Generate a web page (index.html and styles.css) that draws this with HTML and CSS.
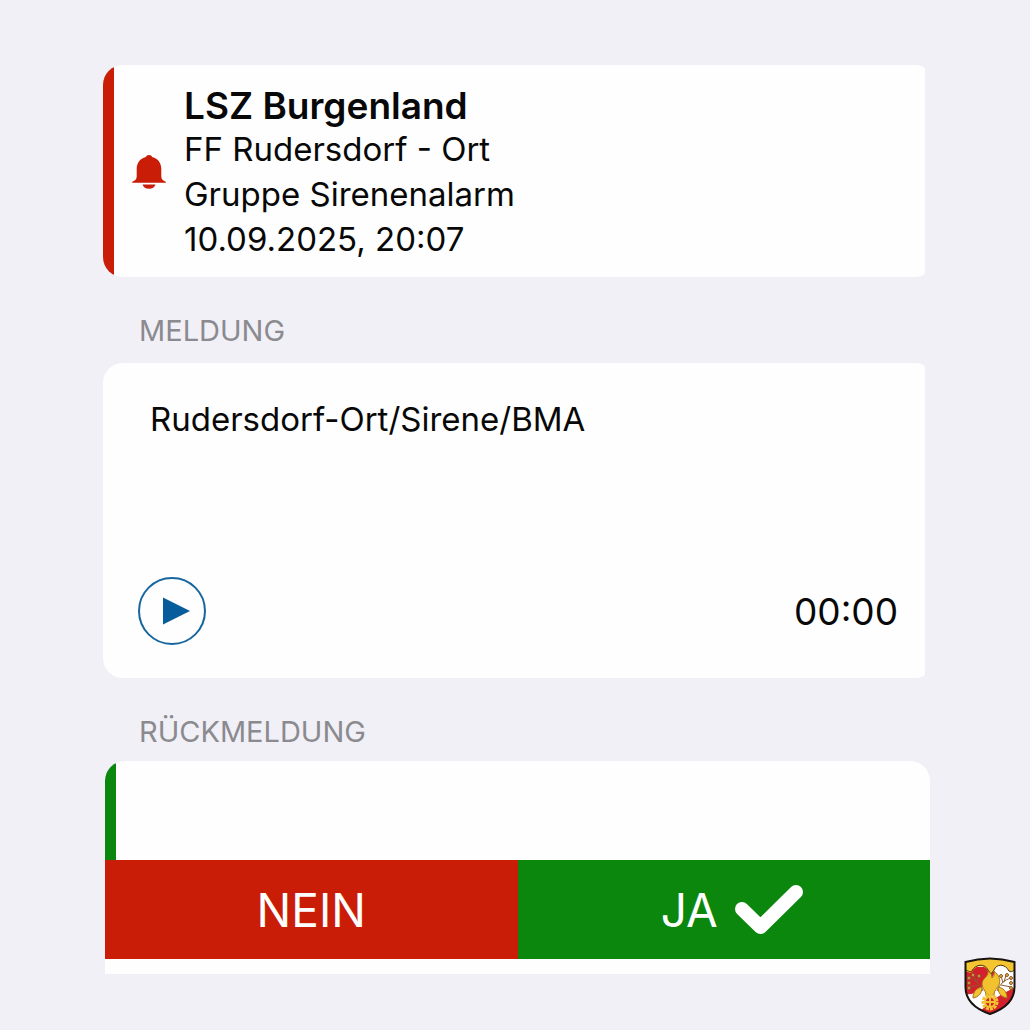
FILE: index.html
```html
<!DOCTYPE html>
<html lang="de">
  <head>
    <meta charset="UTF-8" />
    <meta name="viewport" content="width=device-width, initial-scale=1.0" />
    <title>Alarm</title>
    <link rel="stylesheet" href="styles.css">
  </head>
  <body>
    <main class="container">
      <section class="card alarm">
        <svg class="bell" viewBox="0 0 34 36" aria-hidden="true">
          <path d="M17 0c1.700 0 2.700.8 3.200 2C26 3.500 29.300 8 29.300 14v7.500c0 2.500 1.500 4.200 4.500 5.300v1H.2v-1c3-1.100 4.500-2.800 4.500-5.300V14C4.700 8 8 3.500 13.800 2 14.300.8 15.300 0 17 0z" />
          <path d="M10.500 29.500h13c-.8 2.700-3.200 4.300-6.500 4.300s-5.700-1.600-6.500-4.300z" />
        </svg>
        <div>
          <h1 class="alarm-title">LSZ Burgenland</h1>
          <p>FF Rudersdorf - Ort</p>
          <p>Gruppe Sirenenalarm</p>
          <p>10.09.2025, 20:07</p>
        </div>
      </section>

      <h2 class="label">MELDUNG</h2>
      <section class="card message">
        <p>Rudersdorf-Ort/Sirene/BMA</p>
        <div class="player">
          <button class="play" type="button" aria-label="Abspielen">
            <svg viewBox="0 0 68 68" aria-hidden="true">
              <circle cx="34" cy="34" r="33" />
              <path d="M25 20.500l27 13.500-27 13.500z" />
            </svg>
          </button>
          <span class="time">00:00</span>
        </div>
      </section>

      <h2 class="label">RÜCKMELDUNG</h2>
      <section class="card response">
        <div class="status"></div>
        <div class="buttons">
          <button class="btn no" type="button">NEIN</button>
          <button class="btn yes" type="button">
            JA
            <svg class="check" viewBox="0 0 68 50" aria-hidden="true">
              <path d="M7 24l18.500 18L61 7" />
            </svg>
          </button>
        </div>
      </section>
    </main>

    <svg class="crest" viewBox="0 0 52 58" role="img" aria-label="Wappen">
      <defs>
        <clipPath id="shield">
          <path d="M1.500 5C17 .5 35 .5 50.500 5v25c0 13-10 22-24.500 27C11.500 52 1.500 43 1.500 30z" />
        </clipPath>
      </defs>
      <g clip-path="url(#shield)">
        <path fill="#fff" d="M0 0h52v58H0z" />
        <path fill="#d4202c" d="M0 10h28c2 4 3 6 1 9-3 4-9 8-13 13C11 37 6 38 0 37z" />
        <path fill="#d4202c" d="M52 30C41 35 23 44 14 58h38z" />
        <path fill="#f5c431" d="M0 0h52v13c-3 0-4 3-7 1-4-8-13-7-15 0l-3 3-3-3c-3-7-13-6-16 1-3 2-4-1-8-1z" />
        <path class="crest-line" d="M1 13c3 0 4 3 7 1 3-7 13-8 16-1l3 4 3-4c2-6 11-7 15 1 3 2 4-1 7-1" />
        <path class="stem" d="M19 34c-3-7-7-11-14-13m7 4l-2-7m5 10l-10 2m8-4l2-7M33 34c3-7 7-11 14-13m-7 4l2-7m-5 10l10 2m-8-4l-2-7" />
        <g class="berries">
          <circle cx="5" cy="21" r="1.500" /><circle cx="9" cy="18" r="1.500" /><circle cx="5" cy="26" r="1.500" />
          <circle cx="5" cy="31" r="1.500" /><circle cx="15" cy="19" r="1.500" />
          <circle cx="47" cy="21" r="1.500" /><circle cx="43" cy="18" r="1.500" /><circle cx="47" cy="26" r="1.500" />
          <circle cx="47" cy="31" r="1.500" /><circle cx="37" cy="19" r="1.500" />
        </g>
        <path class="gold" d="M18 30c-5 1-9 4-9 11 6-1 9-5 9-11zM34 30c5 1 9 4 9 11-6-1-9-5-9-11z" />
        <path class="gold" d="M22 38c0-5-4-6-4-11 0-6 7-7 6-13 3 2 4 4 4 7 2-2 3-4 2-7 5 4 7 9 5 14-2 4-5 5-5 10z" />
        <circle class="gear-teeth" cx="26" cy="45" r="7" />
        <circle class="gear" cx="26" cy="45" r="5" />
        <path class="spokes" d="M21 45h10M26 40v10" />
      </g>
      <path class="shield-edge" d="M1.500 5C17 .5 35 .5 50.500 5v25c0 13-10 22-24.500 27C11.500 52 1.500 43 1.500 30z" />
    </svg>
  </body>
</html>
```
FILE: styles.css
```css
* {
  box-sizing: border-box;
}

body {
  margin: 0;
  min-height: 100vh;
  background-color: #f1f0f6;
  color: #080808;
  font-family: Inter, "Liberation Sans", sans-serif;
  font-size: 33px;
  line-height: 45px;
}

h1,
h2,
p {
  margin: 0;
}

button {
  border: none;
  padding: 0;
  font-family: inherit;
  cursor: pointer;
}

.container {
  padding: 65px 100px 55px 103px;
}

.card {
  background-color: #fefefe;
  overflow: hidden;
}

.alarm,
.message {
  margin-right: 5px;
  border-radius: 20px 10px 10px 20px / 20px 4px 4px 20px;
}

.alarm {
  display: flex;
  align-items: center;
  gap: 18px;
  padding: 19px 30px 15px 29px;
  background-image: linear-gradient(to right, #c91d08 11px, transparent 11px);
}

.bell {
  width: 34px;
  height: 36px;
  fill: #c91d08;
}

.alarm-title {
  font-size: 37px;
  font-weight: 600;
  line-height: 43px;
}

.label {
  padding: 32px 36px 10px;
  color: #8a8a8f;
  font-size: 29px;
  font-weight: 400;
  line-height: 44px;
}

.message {
  padding: 34px 27px 33px 47px;
}

.player {
  display: flex;
  align-items: center;
  justify-content: space-between;
  margin: 135px 0 0 -12px;
}

.play {
  width: 68px;
  height: 68px;
  border-radius: 50%;
  background: none;
}

.play svg {
  display: block;
  fill: #075c9c;
}

.play circle {
  fill: none;
  stroke: #17679f;
  stroke-width: 2;
}

.time {
  font-size: 37px;
}

.response {
  margin-left: 2px;
  padding-bottom: 15px;
  border-radius: 20px 20px 0 0;
}

.label + .response {
  margin-top: -3px;
}

.status {
  height: 99px;
  border-left: 11px solid #0a870c;
}

.buttons {
  display: grid;
  grid-template-columns: 1fr 1fr;
}

.btn {
  display: flex;
  align-items: center;
  justify-content: center;
  gap: 17px;
  height: 99px;
  color: #fff;
  font-size: 46px;
  font-weight: 400;
}

.no {
  background-color: #c91d08;
}

.yes {
  padding-left: 16px;
  background-color: #0a870c;
}

.check {
  width: 68px;
  height: 50px;
  fill: none;
  stroke: #fff;
  stroke-width: 14;
  stroke-linecap: round;
  stroke-linejoin: round;
}

/* crest in the corner */
.crest {
  position: absolute;
  right: 14px;
  bottom: 15px;
  width: 52px;
  height: 58px;
}

.crest-line {
  fill: none;
  stroke: #4a3310;
  stroke-width: 1;
}

.stem {
  fill: none;
  stroke: #8a5a2c;
  stroke-width: 1;
}

.berries {
  fill: #e8b03a;
  stroke: #8a5a2c;
  stroke-width: 1;
}

.gold {
  fill: #f2c12e;
  stroke: #a8741c;
  stroke-width: 1;
}

.gear {
  fill: #d4202c;
  stroke: #f2c12e;
  stroke-width: 2;
}

.gear-teeth {
  fill: none;
  stroke: #f2c12e;
  stroke-width: 3;
  stroke-dasharray: 3 1;
}

.spokes {
  fill: none;
  stroke: #f2c12e;
  stroke-width: 2;
}

.shield-edge {
  fill: none;
  stroke: #17130f;
  stroke-width: 2;
}
```
